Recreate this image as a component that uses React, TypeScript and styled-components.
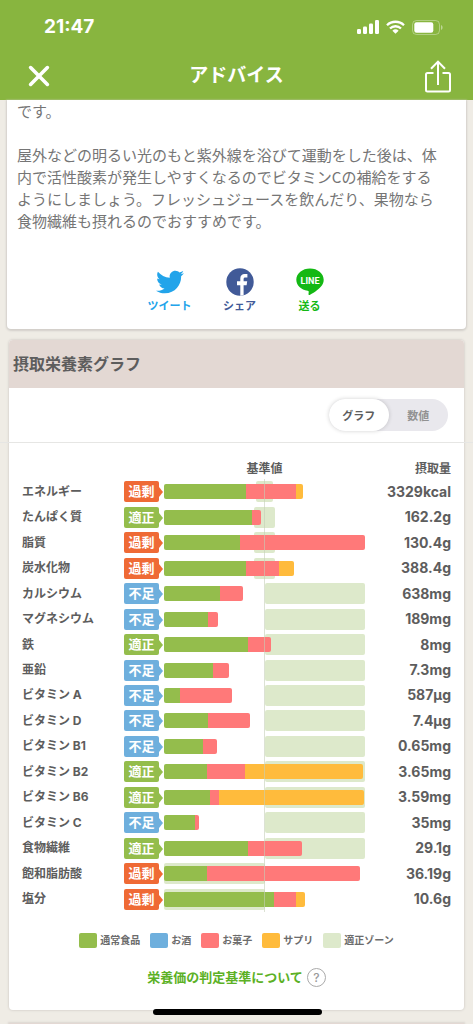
import React, { useState } from "react";
import styled, { createGlobalStyle } from "styled-components";
import { FaTwitter } from "react-icons/fa";

type Source = "food" | "alcohol" | "sweets" | "supplement";
type Verdict = "over" | "good" | "short";

interface Nutrient {
  name: string;
  verdict: Verdict;
  amount: string;
  /* start and end of the proper zone, in percent of the reference value */
  zone: [number, number];
  /* intake by source, in percent of the reference value */
  intake: Partial<Record<Source, number>>;
}

const palette = {
  green: "#88b53f",
  page: "#efece5",
  text: "#5d5d5d",
  zone: "#dde9cb",
};

const sourceColor: Record<Source, string> = {
  food: "#94bd4c",
  alcohol: "#6eafdd",
  sweets: "#ff7979",
  supplement: "#ffbb3c",
};

const verdictStyle: Record<Verdict, { label: string; color: string }> = {
  over: { label: "過剰", color: "#ef6a35" },
  good: { label: "適正", color: "#94bd4c" },
  short: { label: "不足", color: "#6eafdd" },
};

const nutrients: Nutrient[] = [
  { name: "エネルギー", verdict: "over", amount: "3329kcal", zone: [92, 108], intake: { food: 82, sweets: 49, supplement: 7 } },
  { name: "たんぱく質", verdict: "good", amount: "162.2g", zone: [90, 110], intake: { food: 88, sweets: 9 } },
  { name: "脂質", verdict: "over", amount: "130.4g", zone: [90, 110], intake: { food: 76, sweets: 124 } },
  { name: "炭水化物", verdict: "over", amount: "388.4g", zone: [90, 110], intake: { food: 82, sweets: 32, supplement: 15 } },
  { name: "カルシウム", verdict: "short", amount: "638mg", zone: [100, 200], intake: { food: 56, sweets: 23 } },
  { name: "マグネシウム", verdict: "short", amount: "189mg", zone: [100, 200], intake: { food: 44, sweets: 10 } },
  { name: "鉄", verdict: "good", amount: "8mg", zone: [100, 200], intake: { food: 84, sweets: 22 } },
  { name: "亜鉛", verdict: "short", amount: "7.3mg", zone: [100, 200], intake: { food: 49, sweets: 16 } },
  { name: "ビタミン A", verdict: "short", amount: "587μg", zone: [100, 200], intake: { food: 16, sweets: 52 } },
  { name: "ビタミン D", verdict: "short", amount: "7.4μg", zone: [100, 200], intake: { food: 44, sweets: 42 } },
  { name: "ビタミン B1", verdict: "short", amount: "0.65mg", zone: [100, 200], intake: { food: 39, sweets: 14 } },
  { name: "ビタミン B2", verdict: "good", amount: "3.65mg", zone: [100, 200], intake: { food: 43, sweets: 38, supplement: 117 } },
  { name: "ビタミン B6", verdict: "good", amount: "3.59mg", zone: [100, 200], intake: { food: 46, sweets: 9, supplement: 144 } },
  { name: "ビタミン C", verdict: "short", amount: "35mg", zone: [100, 200], intake: { food: 31, sweets: 4 } },
  { name: "食物繊維", verdict: "good", amount: "29.1g", zone: [100, 200], intake: { food: 84, sweets: 53 } },
  { name: "飽和脂肪酸", verdict: "over", amount: "36.19g", zone: [0, 100], intake: { food: 43, sweets: 152 } },
  { name: "塩分", verdict: "over", amount: "10.6g", zone: [0, 100], intake: { food: 109, sweets: 22, supplement: 9 } },
];

const legend = [
  { label: "通常食品", color: sourceColor.food },
  { label: "お酒", color: sourceColor.alcohol },
  { label: "お菓子", color: sourceColor.sweets },
  { label: "サプリ", color: sourceColor.supplement },
  { label: "適正ゾーン", color: palette.zone },
];

const GlobalStyle = createGlobalStyle`
  *, *::before, *::after { box-sizing: border-box; }
  body {
    margin: 0;
    background: ${palette.page};
    color: ${palette.text};
    font-family: Inter, "Noto Sans CJK JP", sans-serif;
  }
  button { font-family: inherit; border: 0; padding: 0; background: none; cursor: pointer; }
`;

const Screen = styled.div`
  display: flex;
  flex-direction: column;
  min-height: 100vh;
  overflow: hidden;
`;

const TopBar = styled.header`
  background: ${palette.green};
  color: #fff;
`;

const StatusBar = styled.div`
  display: flex;
  align-items: center;
  justify-content: space-between;
  height: 52px;
  padding: 2px 30px 0 44px;
`;

const Clock = styled.time`
  font-size: 19px;
  font-weight: 700;
  line-height: 24px;
`;

const StatusIcons = styled.div`
  display: flex;
  align-items: center;
  gap: 7px;
`;

const NavBar = styled.div`
  display: grid;
  grid-template-columns: 36px 1fr 36px;
  align-items: center;
  height: 48px;
  padding: 0 21px;
`;

const Title = styled.h1`
  margin: 0;
  text-align: center;
  font-size: 19px;
  font-weight: 700;
  line-height: 28px;
`;

const IconButton = styled.button<{ $align: "center" | "flex-end" }>`
  display: flex;
  justify-content: ${(p) => p.$align};
  color: inherit;
`;

const AdviceCard = styled.section`
  margin: 0 7px;
  padding: 0 10px 15px;
  background: #fff;
  border-radius: 0 0 4px 4px;
  box-shadow: 0 1px 2px 1px #d2cfca;
`;

const AdviceText = styled.p`
  margin: 0 0 22px;
  color: #757575;
  font-family: "Noto Sans CJK JP", sans-serif;
  font-size: 15px;
  font-weight: 400;
  line-height: 22px;
`;

const ShareRow = styled.div`
  display: flex;
  justify-content: center;
  padding: 14px 0 0 6px;
`;

const ShareButton = styled.button<{ $color: string }>`
  display: flex;
  flex-direction: column;
  align-items: center;
  gap: 2px;
  width: 70px;
  color: ${(p) => p.$color};
  font-size: 11px;
  font-weight: 700;
  line-height: 16px;
  svg { display: block; }
`;

const GraphCard = styled.section`
  margin: 11px 9px 13px;
  background: #fff;
  border-radius: 4px;
  box-shadow: 0 0 2px 1px #dbd7d1;
`;

const CardHeading = styled.h2`
  margin: 0;
  padding: 12px 4px;
  background: #e3d8d3;
  border-radius: 4px 4px 0 0;
  font-size: 16px;
  font-weight: 700;
  line-height: 24px;
`;

const ToggleRow = styled.div`
  display: flex;
  justify-content: flex-end;
  margin: 0 -9px;
  padding: 11px 25px 11px 9px;
  border-bottom: 1px solid #e6e6e4;
`;

const Toggle = styled.div`
  display: flex;
  width: 119px;
  height: 32px;
  border-radius: 16px;
  background: #e9e8ed;
`;

const ToggleOption = styled.button<{ $active: boolean }>`
  flex: 1;
  border-radius: 16px;
  background: ${(p) => (p.$active ? "#fff" : "transparent")};
  box-shadow: ${(p) => (p.$active ? "0 0 4px rgba(0, 0, 0, 0.18)" : "none")};
  color: ${(p) => (p.$active ? palette.text : "#929292")};
  font-size: 11px;
  font-weight: 700;
`;

const Chart = styled.div`
  padding: 15px 13px 0;
`;

const ChartTable = styled.table`
  width: 100%;
  height: 454px;
  table-layout: fixed;
  border-collapse: collapse;
  font-size: 12px;
  font-weight: 700;
  line-height: 18px;
  th, td { padding: 0; font-weight: 700; text-align: left; white-space: nowrap; }
`;

const NameCol = styled.col`width: 102px;`;
const VerdictCol = styled.col`width: 40px;`;
const AmountCol = styled.col`width: 86px;`;

const HeadRow = styled.tr`
  height: 21px;
  && th { text-align: right; }
  && th:nth-child(3) { text-align: center; }
`;

const NutrientRow = styled.tr`
  height: 25px;
`;

const VerdictTag = styled.span<{ $color: string }>`
  position: relative;
  display: block;
  width: 35px;
  height: 21px;
  border-radius: 2px;
  background: ${(p) => p.$color};
  color: #fff;
  text-align: center;
  font-size: 13px;
  line-height: 21px;
  &::after {
    content: "";
    position: absolute;
    top: 6px;
    left: 35px;
    border: solid transparent;
    border-width: 5px 0 5px 4px;
    border-left-color: ${(p) => p.$color};
  }
`;

const BarCell = styled.td`
  position: relative;
  &::after {
    content: "";
    position: absolute;
    top: 0;
    bottom: 0;
    left: 50%;
    width: 1px;
    margin-left: -1px;
    background: rgba(196, 206, 184, 0.6);
  }
`;

const Track = styled.div`
  position: relative;
  display: flex;
  align-items: center;
  height: 21px;
`;

const Zone = styled.div`
  position: absolute;
  top: 0;
  bottom: 0;
  border-radius: 2px;
  background: ${palette.zone};
`;

const Bar = styled.div`
  position: relative;
  display: flex;
  width: 100%;
  height: 15px;
`;

const Segment = styled.div<{ $source: Source }>`
  background: ${(p) => sourceColor[p.$source]};
  &:first-child { border-radius: 2px 0 0 2px; }
  &:last-child { border-radius: 0 2px 2px 0; }
`;

const Amount = styled.td`
  && { text-align: right; }
  font-size: 14px;
`;

const Legend = styled.ul`
  display: flex;
  justify-content: center;
  gap: 10px;
  margin: 0;
  padding: 21px 0 0;
  list-style: none;
`;

const LegendItem = styled.li<{ $color: string }>`
  display: flex;
  align-items: center;
  gap: 3px;
  color: #6c6c6c;
  font-size: 10px;
  font-weight: 700;
  line-height: 15px;
  &::before {
    content: "";
    width: 18px;
    height: 15px;
    border-radius: 2px;
    background: ${(p) => p.$color};
  }
`;

const HelpLink = styled.a`
  display: flex;
  align-items: center;
  justify-content: center;
  gap: 4px;
  padding: 19px 0 23px;
  color: #5cb125;
  font-size: 13px;
  font-weight: 700;
  line-height: 20px;
  text-decoration: none;
`;

const HelpMark = styled.span`
  width: 19px;
  height: 19px;
  border: 1px solid #aaa;
  border-radius: 50%;
  color: #9a9a9a;
  text-align: center;
  font-size: 12px;
  font-weight: 500;
  line-height: 17px;
`;

const NextCard = styled.section`
  flex: 1;
  min-height: 1px;
  margin: 0 9px;
  background: #e3d8d3;
  box-shadow: 0 0 2px 1px #dbd7d1;
`;

const HomeIndicator = styled.div`
  position: fixed;
  bottom: 9px;
  left: 50%;
  width: 169px;
  height: 6px;
  margin-left: -84px;
  border-radius: 3px;
  background: #000;
`;

const SignalIcon = () => (
  <svg width="22" height="14" viewBox="0 0 22 14" fill="currentColor" aria-hidden="true">
    <rect x="0" y="9" width="4" height="5" rx="1.2" />
    <rect x="6" y="6.5" width="4" height="7.5" rx="1.2" />
    <rect x="12" y="3.5" width="4" height="10.5" rx="1.2" />
    <rect x="18" y="0" width="4" height="14" rx="1.2" />
  </svg>
);

const WifiIcon = () => (
  <svg width="19" height="14" viewBox="0 0 19 14" aria-hidden="true">
    <g fill="none" stroke="currentColor" strokeWidth="2.3">
      <path d="M1 5.2a12.2 12.2 0 0 1 17 0" />
      <path d="M4 8.5a7.8 7.8 0 0 1 11 0" />
    </g>
    <path d="M6.4 10.7a4.6 4.6 0 0 1 6.2 0L9.5 13.8z" fill="currentColor" />
  </svg>
);

const BatteryIcon = () => (
  <svg width="31" height="15" viewBox="0 0 31 15" aria-hidden="true">
    <rect x="0.5" y="0.5" width="27" height="14" rx="4" fill="none" stroke="currentColor" opacity="0.35" />
    <rect x="2.3" y="2.3" width="19" height="10.4" rx="2.2" fill="currentColor" />
    <path d="M29 5v5c1-.4 1.6-1.4 1.6-2.5S30 5.4 29 5z" fill="currentColor" opacity="0.45" />
  </svg>
);

const CloseIcon = () => (
  <svg width="22" height="22" viewBox="0 0 22 22" stroke="currentColor" strokeWidth="3.6" strokeLinecap="round" aria-hidden="true">
    <path d="M2.6 2.6 19.4 19.4M19.4 2.6 2.6 19.4" />
  </svg>
);

const ShareIcon = () => (
  <svg width="28" height="34" viewBox="0 0 28 34" fill="none" stroke="currentColor" strokeWidth="2" aria-hidden="true">
    <path d="M9.5 14H3.500Q2 14 2 15.500V31Q2 32.500 3.500 32.500H24.500Q26 32.500 26 31V15.500Q26 14 24.500 14H18.500" />
    <path d="M14 26V3M7 9.800 14 2.600 21 9.800" />
  </svg>
);

const FacebookIcon = () => (
  <svg width="28" height="28" viewBox="0 0 28 28" aria-hidden="true">
    <circle cx="14" cy="14" r="13.7" fill="#415a98" />
    <path
      d="M14.3 27.7V17.3H11V13.3H14.3V10.4C14.3 7.5 16 5.9 18.7 5.9 19.7 5.9 20.7 6 21.4 6.1V9.6H19.5C18 9.6 17.6 10.3 17.6 11.3V13.3H21.2L20.6 17.3H17.6V27.2Z"
      fill="#fff"
    />
  </svg>
);

const LineIcon = () => (
  <svg width="28" height="28" viewBox="0 0 28 28" aria-hidden="true">
    <path
      d="M14 .5C6.4 .5 .3 5.4 .3 11.700c0 5.500 4.800 10.100 11.400 11 1 .2 1.100.6 1 1.500l-.2 1.900c-.1.900.3 1.300 1.300.8 2.500-1.200 8-4.700 11-8.100 1.900-2.100 2.900-4.400 2.900-7.100C27.700 5.400 21.600 .5 14 .5z"
      fill="#14b814"
    />
    <text x="14" y="15.500" fill="#fff" fontFamily="Roboto, sans-serif" fontSize="9" fontWeight="700" textAnchor="middle">
      LINE
    </text>
  </svg>
);

const NutrientLine = ({ item }: { item: Nutrient }) => {
  const verdict = verdictStyle[item.verdict];
  const [from, to] = item.zone;
  return (
    <NutrientRow>
      <th scope="row">{item.name}</th>
      <td>
        <VerdictTag $color={verdict.color}>{verdict.label}</VerdictTag>
      </td>
      <BarCell>
        <Track>
          <Zone style={{ left: `${from / 2}%`, width: `${(to - from) / 2}%` }} />
          <Bar>
            {(Object.entries(item.intake) as [Source, number][]).map(([source, value]) => (
              <Segment key={source} $source={source} style={{ width: `${value / 2}%` }} />
            ))}
          </Bar>
        </Track>
      </BarCell>
      <Amount>{item.amount}</Amount>
    </NutrientRow>
  );
};

export default function App() {
  const [view, setView] = useState<"graph" | "numbers">("graph");

  return (
    <Screen>
      <GlobalStyle />
      <TopBar>
        <StatusBar>
          <Clock>21:47</Clock>
          <StatusIcons>
            <SignalIcon />
            <WifiIcon />
            <BatteryIcon />
          </StatusIcons>
        </StatusBar>
        <NavBar>
          <IconButton type="button" $align="center" aria-label="閉じる">
            <CloseIcon />
          </IconButton>
          <Title>アドバイス</Title>
          <IconButton type="button" $align="flex-end" aria-label="共有">
            <ShareIcon />
          </IconButton>
        </NavBar>
      </TopBar>

      <AdviceCard>
        <AdviceText>です。</AdviceText>
        <AdviceText>
          屋外などの明るい光のもと紫外線を浴びて運動をした後は、体
          <br />
          内で活性酸素が発生しやすくなるのでビタミンCの補給をする
          <br />
          ようにしましょう。フレッシュジュースを飲んだり、果物なら
          <br />
          食物繊維も摂れるのでおすすめです。
        </AdviceText>
        <ShareRow>
          <ShareButton type="button" $color="#22a4ea">
            <FaTwitter size={28} aria-hidden="true" />
            ツイート
          </ShareButton>
          <ShareButton type="button" $color="#415a98">
            <FacebookIcon />
            シェア
          </ShareButton>
          <ShareButton type="button" $color="#14b814">
            <LineIcon />
            送る
          </ShareButton>
        </ShareRow>
      </AdviceCard>

      <GraphCard>
        <CardHeading>摂取栄養素グラフ</CardHeading>
        <ToggleRow>
          <Toggle>
            <ToggleOption type="button" $active={view === "graph"} aria-pressed={view === "graph"} onClick={() => setView("graph")}>
              グラフ
            </ToggleOption>
            <ToggleOption type="button" $active={view === "numbers"} aria-pressed={view === "numbers"} onClick={() => setView("numbers")}>
              数値
            </ToggleOption>
          </Toggle>
        </ToggleRow>
        <Chart>
          <ChartTable>
            <colgroup>
              <NameCol />
              <VerdictCol />
              <col />
              <AmountCol />
            </colgroup>
            <thead>
              <HeadRow>
                <td />
                <td />
                <th scope="col">基準値</th>
                <th scope="col">摂取量</th>
              </HeadRow>
            </thead>
            <tbody>
              {nutrients.map((item) => (
                <NutrientLine key={item.name} item={item} />
              ))}
            </tbody>
          </ChartTable>
          <Legend>
            {legend.map((entry) => (
              <LegendItem key={entry.label} $color={entry.color}>
                {entry.label}
              </LegendItem>
            ))}
          </Legend>
          <HelpLink href="#criteria">
            栄養価の判定基準について
            <HelpMark>?</HelpMark>
          </HelpLink>
        </Chart>
      </GraphCard>
      <NextCard />
      <HomeIndicator />
    </Screen>
  );
}
